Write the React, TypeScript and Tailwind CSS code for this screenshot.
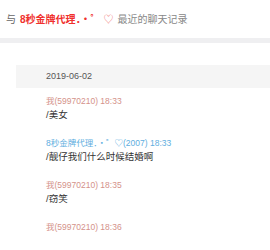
const font = { fontFamily: '"Liberation Sans", "Noto Sans CJK SC", sans-serif' };

type Msg = { me: boolean; name: string; time: string; text: string };

const msgs: Msg[] = [
  { me: true, name: "我(59970210)", time: "18:33", text: "/美女" },
  { me: false, name: "8秒金牌代理．・゜♡(2007)", time: "18:33", text: "/靓仔我们什么时候结婚啊" },
  { me: true, name: "我(59970210)", time: "18:35", text: "/窃笑" },
  { me: true, name: "我(59970210)", time: "18:36", text: "" },
];

export default function App() {
  return (
    <div className="h-[250px] w-[270px] overflow-hidden bg-white" style={font}>
      <div className="flex h-[38px] items-center whitespace-nowrap pl-[6px] text-[10px] text-[#666]">
        <span>与</span>
        <span className="ml-[4px] font-bold text-[#f0302d]">8秒金牌代理．・゜</span>
        <span className="ml-[3px] text-[#f07070]">♡</span>
        <span className="ml-[4px] text-[#888]">最近的聊天记录</span>
      </div>
      <div className="h-[5px] bg-[#efeff1]" />

      <div className="mt-[22px] ml-[16px] flex h-[23px] items-center bg-[#f5f5f5] pl-[30px] text-[9px] text-[#555]">
        2019-06-02
      </div>

      <div className="mt-[6px] pl-[46px]">
        {msgs.map((m, i) => (
          <div key={i} className="mb-[14px]">
            <div
              className={`h-[14px] leading-[14px] whitespace-nowrap text-[8.5px] ${
                m.me ? "text-[#d4928a]" : "text-[#5eaee0]"
              }`}
            >
              {m.name} {m.time}
            </div>
            <div className="h-[14px] leading-[14px] whitespace-nowrap text-[9.5px] text-[#333]">
              {m.text}
            </div>
          </div>
        ))}
      </div>
    </div>
  );
}
